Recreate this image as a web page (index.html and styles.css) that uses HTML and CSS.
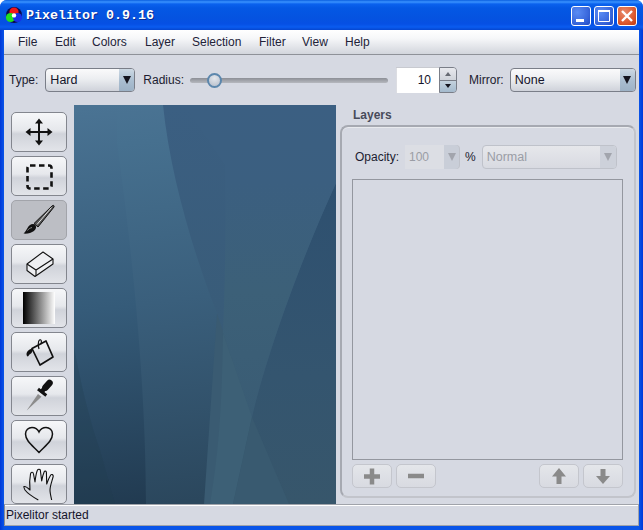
FILE: index.html
```html
<!DOCTYPE html>
<html lang="en">
<head>
<meta charset="utf-8">
<title>Pixelitor 0.9.16</title>
<link rel="stylesheet" href="styles.css">
</head>
<body>
<div class="window">
  <header class="titlebar">
    <svg class="app-icon" width="18" height="18" viewBox="0 0 18 18">
      <circle cx="9" cy="9" r="8" fill="#0a0a50"/>
      <circle cx="9" cy="6" r="4.6" fill="#f01818"/>
      <circle cx="5.5" cy="11.5" r="4.6" fill="#20e020"/>
      <circle cx="12.5" cy="11.5" r="4.6" fill="#1830e8"/>
      <circle cx="9" cy="9.4" r="2.2" fill="#fff"/>
    </svg>
    <span class="title-text">Pixelitor 0.9.16</span>
    <div class="win-buttons">
      <button class="win-btn"><svg width="20" height="20" viewBox="0 0 20 20"><rect x="5" y="13" width="8" height="3" fill="#fff"/></svg></button>
      <button class="win-btn"><svg width="20" height="20" viewBox="0 0 20 20"><path d="M4.500 4.500h11v11h-11z" fill="none" stroke="#fff"/><rect x="4" y="4" width="12" height="2" fill="#fff"/></svg></button>
      <button class="win-btn win-close"><svg width="20" height="20" viewBox="0 0 20 20"><path d="M5 5l10 10M15 5L5 15" stroke="#fff" stroke-width="2.400"/></svg></button>
    </div>
  </header>
  <div class="client">
    <nav class="menubar">
      <span>File</span><span>Edit</span><span>Colors</span><span>Layer</span><span>Selection</span><span>Filter</span><span>View</span><span>Help</span>
    </nav>
    <div class="toolbar">
      <label class="lbl lbl-type">Type:</label>
      <div class="combo combo-type"><span class="combo-val">Hard</span><span class="combo-arrow"><i class="tri-down"></i></span></div>
      <label class="lbl lbl-radius">Radius:</label>
      <div class="slider"><div class="slider-track"></div><div class="slider-thumb"></div></div>
      <div class="spinner">
        <span class="spin-val">10</span>
        <span class="spin-btns"><span class="spin-up"><i class="tri-up"></i></span><span class="spin-down"><i class="tri-down small"></i></span></span>
      </div>
      <label class="lbl lbl-mirror">Mirror:</label>
      <div class="combo combo-mirror"><span class="combo-val">None</span><span class="combo-arrow"><i class="tri-down"></i></span></div>
    </div>
    <div class="main">
      <aside class="tools">
        <button class="tool">
          <svg width="56" height="40" viewBox="0 0 56 40"><path d="M28 9v22M17 20h22" stroke="#111" stroke-width="2"/><path d="M28 6.500l4 5h-8zM28 33.500l4-5h-8zM14.500 20l5-4v8zM41.500 20l-5-4v8z" fill="#111"/></svg>
        </button>
        <button class="tool">
          <svg width="56" height="40" viewBox="0 0 56 40"><rect x="16.500" y="9.500" width="24" height="23" rx="2.500" fill="none" stroke="#111" stroke-width="2.600" stroke-dasharray="5.500 3.500"/></svg>
        </button>
        <button class="tool tool-active">
          <svg width="56" height="40" viewBox="0 0 56 40"><path d="M41.500 5.500c1-.6 2 .4 1.500 1.500L27 27l-4-3.500z" fill="#555" stroke="#111"/><path d="M40.500 7.500L26 24.500" stroke="#e6e6e6" stroke-width="1"/><path d="M22 24c2 0 3.500 2 3 4-.5 2-3 4-6 5-2 .6-5 .8-6.500.5 1.500-1 2.500-3 4-5.500 1-2 3-4 5.500-4z" fill="#111"/><path d="M16.500 30.500c1-1.500 2.500-2.500 4.500-3" stroke="#8a8a8a" fill="none"/></svg>
        </button>
        <button class="tool">
          <svg width="56" height="40" viewBox="0 0 56 40"><path d="M16 20l16-12 10 7v5L24 32.500l-8-6z" fill="#eeeff2" stroke="#111" stroke-width="1.100" stroke-linejoin="round"/><path d="M16 20l9 6 17-11M25 26v6" fill="none" stroke="#111" stroke-width="1.100"/></svg>
        </button>
        <button class="tool">
          <svg width="56" height="40" viewBox="0 0 56 40"><defs><linearGradient id="bw"><stop offset="0" stop-color="#000"/><stop offset="1" stop-color="#fff"/></linearGradient></defs><rect x="12" y="4" width="32" height="32" fill="url(#bw)"/></svg>
        </button>
        <button class="tool">
          <svg width="56" height="40" viewBox="0 0 56 40"><path d="M21 16.500l14-7.500 7 16-13 8z" fill="none" stroke="#111" stroke-width="1.700" stroke-linejoin="round"/><path d="M28 17c-1-3-1-8 .5-9s2.500 1 1.500 4" fill="none" stroke="#111" stroke-width="1.200"/><path d="M22 16c-3 1-6.500 3-6.500 6s2 3 2.500 1c.5-1 2-1 2.500-2 1-1 1-3 1.500-5z" fill="#111"/></svg>
        </button>
        <button class="tool">
          <svg width="56" height="40" viewBox="0 0 56 40"><path d="M15.700 34.500L27 18l3.500 2.800z" fill="#8c8c8c"/><path d="M27 13l8.300 6.500" stroke="#111" stroke-width="3"/><path d="M30 16.500l7-8" stroke="#111" stroke-width="4.500"/><path d="M34.500 11.500L38.500 7" stroke="#111" stroke-width="6.500" stroke-linecap="round"/></svg>
        </button>
        <button class="tool">
          <svg width="56" height="40" viewBox="0 0 56 40"><path d="M28 32.500C22 26 14.500 21 14.500 14c0-4 3-6.500 6.500-6.500 3 0 5.500 1.500 7 4.500 1.500-3 4-4.500 7-4.500 3.500 0 6.500 2.500 6.500 6.500 0 7-7.500 12-13.500 18.500z" fill="none" stroke="#111" stroke-width="1.500"/></svg>
        </button>
        <button class="tool">
          <svg width="56" height="40" viewBox="0 0 56 40"><path d="M27.300 36C22 33 17 30 14 26c-1-2-1.500-3-1-3.500 2-.5 4 1.500 6 3.500-.5-5-.5-11 .5-16 .5-2 2.500-2.500 3 0L24 18c.5-4 1-9 2.500-12 .5-1 2.500-1 2.800 0l1.400 11c.5-3 1.500-7 2.500-9.300.5-1 2-.8 2.200.6L35.700 20c1-3 2.500-6.500 4-9 .8-1 2.800-.5 2.500 1.500C41 17 39 22 39 26c0 3 1 7 1.700 10" fill="none" stroke="#111" stroke-width="1.100" stroke-linejoin="round"/></svg>
        </button>
      </aside>
      <div class="canvas">
        <svg width="262" height="399" viewBox="0 0 262 399">
          <defs>
            <linearGradient id="g0" gradientUnits="userSpaceOnUse" x1="40" y1="0" x2="90" y2="399"><stop offset="0" stop-color="#4a7393"/><stop offset=".5" stop-color="#355b79"/><stop offset="1" stop-color="#213a50"/></linearGradient>
            <linearGradient id="g1" gradientUnits="userSpaceOnUse" x1="40" y1="0" x2="90" y2="399"><stop offset="0" stop-color="#4a7393"/><stop offset=".1" stop-color="#46708f"/><stop offset=".5" stop-color="#3a5f7c"/><stop offset="1" stop-color="#2b475d"/></linearGradient>
            <linearGradient id="g2" x1="0" y1="0" x2="0" y2="1"><stop offset="0" stop-color="#3b5f82"/><stop offset=".5" stop-color="#395c79"/><stop offset="1" stop-color="#35556c"/></linearGradient>
            <linearGradient id="g3" x1="0" y1="0" x2="0" y2="1"><stop offset="0" stop-color="#3b5f82"/><stop offset=".25" stop-color="#3b5f80"/><stop offset=".6" stop-color="#3c6078"/><stop offset="1" stop-color="#3a5c74"/></linearGradient>
            <linearGradient id="g4" x1="0" y1="0" x2="0" y2="1"><stop offset="0" stop-color="#2e5070"/><stop offset=".6" stop-color="#34556f"/><stop offset="1" stop-color="#37566b"/></linearGradient>
          </defs>
          <rect width="262" height="399" fill="url(#g0)"/>
          <path d="M0 242C8 285 17 320 26 345L41 399H0z" fill="#1f3a4c" opacity=".25"/>
          <path d="M43 38C56 130 72 270 72 399H140C152 300 155 160 151 78L140 0H43z" fill="url(#g1)"/>
          <path d="M143 208L182 312 222 399H130z" fill="#3a5b72"/>
          <path d="M89 0C96 70 120 150 143 208L178 312 203 368 215 399H262V0z" fill="url(#g2)"/>
          <path d="M262 78C220 170 190 260 178 312L159 399H262z" fill="url(#g4)"/>
          <path d="M151 60C152 120 151 180 149 228L178 312C190 260 220 170 262 78V0H110z" fill="url(#g3)"/>
          <path d="M149 228L178 312 159 399H136C146 340 148 290 149 228z" fill="#3d6076"/>
          <path d="M178 312L215 399H159z" fill="#395a70"/>
        </svg>
      </div>
      <section class="layers">
        <h2 class="layers-title">Layers</h2>
        <div class="layers-panel">
          <div class="layers-top">
            <span class="lbl op-lbl">Opacity:</span>
            <div class="op-spin"><span class="op-val">100</span><span class="op-arrow"><i class="tri-down dim"></i></span></div>
            <span class="lbl pct">%</span>
            <div class="combo combo-blend"><span class="combo-val">Normal</span><span class="combo-arrow"><i class="tri-down dim"></i></span></div>
          </div>
          <div class="layer-list"></div>
          <div class="layer-btns">
            <button class="lbtn"><svg width="40" height="24" viewBox="0 0 40 24"><path d="M20 4.500v16M12 12.500h16" stroke="#8a8a8a" stroke-width="4.500"/></svg></button>
            <button class="lbtn"><svg width="40" height="24" viewBox="0 0 40 24"><path d="M12 12h16" stroke="#8a8a8a" stroke-width="4.500"/></svg></button>
            <span class="lbtn-spacer"></span>
            <button class="lbtn"><svg width="40" height="24" viewBox="0 0 40 24"><path d="M20 4l7 8.500h-4.500V20h-5v-7.500H13z" fill="#8a8a8a"/></svg></button>
            <button class="lbtn"><svg width="40" height="24" viewBox="0 0 40 24"><path d="M20 20l7-8h-4.500V5h-5v7H13z" fill="#8a8a8a"/></svg></button>
          </div>
        </div>
      </section>
    </div>
    <footer class="status">Pixelitor started</footer>
  </div>
</div>
</body>
</html>
```

FILE: styles.css
```css
* { box-sizing: border-box; }
html, body { margin: 0; padding: 0; background: #fff; }
body { width: 643px; height: 530px; overflow: hidden; font-family: "Liberation Sans", Arial, sans-serif; font-size: 12px; color: #1c1c30; }

.window { width: 643px; height: 530px; display: flex; flex-direction: column; background: linear-gradient(90deg, #0038d8 0, #0a55e8 4px, #0a55e8 639px, #0038d8 100%); border-radius: 7px 7px 0 0; overflow: hidden; }

.titlebar { height: 30px; flex: none; display: flex; align-items: center; padding: 0 6px 0 5px; background: linear-gradient(180deg, #0a5fe0 0, #3a93ff 2px, #0a62ee 4px, #0458e4 8px, #0553e0 18px, #0650e4 24px, #0a5cf0 27px, #0546d0 30px); }
.app-icon { flex: none; margin-right: 3px; }
.title-text { font-family: "Liberation Mono", monospace; font-size: 13.33px; font-weight: 700; color: #fff; text-shadow: 1px 1px 0 #0a2a90; }
.win-buttons { margin-left: auto; display: flex; gap: 3px; margin-top: 2px; }
.win-btn { width: 20px; height: 20px; padding: 0; border: 1px solid #fff; border-radius: 3px; background: radial-gradient(circle at 30% 30%, #5a8cf4, #3a68dc 60%, #1e48c4); display: block; }
.win-btn svg { display: block; margin: -1px; }
.win-close { background: radial-gradient(circle at 35% 30%, #e88a6c, #dc5a30 60%, #c03810); }

.client { flex: 1; margin: 0 4px 4px; background: #d6d9e2; display: flex; flex-direction: column; min-height: 0; }

.menubar { height: 25px; flex: none; display: grid; grid-template-columns: 37px 37px 53px 47px 67px 43px 43px auto; align-items: center; padding: 0 0 0 14px; background: linear-gradient(180deg, #ffffff 0, #f6f7f9 35%, #d2d5dc 100%); border-bottom: 1px solid #8e9198; color: #222238; }

.toolbar { height: 50px; flex: none; display: flex; align-items: center; padding: 0 3px 0 5px; }
.lbl { color: #1c1c30; }
.lbl-type { margin-right: 7px; }
.lbl-radius { margin: 0 6px 0 8px; }
.lbl-mirror { margin: 0 6px 0 12px; }

.combo { height: 24px; display: flex; border: 1px solid #7a7e88; border-radius: 4px; background: linear-gradient(180deg, #fafafb 0, #eceef1 45%, #cfd2da 100%); overflow: hidden; }
.combo-val { flex: 1; padding-left: 4px; line-height: 22px; font-size: 12.5px; color: #14142a; }
.combo-arrow { width: 15px; display: flex; align-items: center; justify-content: center; background: linear-gradient(180deg, #cdd9e4 0, #a9bdd0 55%, #9db2c6 100%); }
.combo-type { width: 90px; }
.combo-mirror { width: 126px; }

.tri-down, .tri-up { display: block; width: 0; height: 0; border-left: 4.5px solid transparent; border-right: 4.5px solid transparent; }
.tri-down { border-top: 8px solid #15151f; }
.tri-up { border-left-width: 3.500px; border-right-width: 3.500px; border-bottom: 4px solid #666a72; }
.tri-down.small { border-left-width: 3.500px; border-right-width: 3.500px; border-top-width: 4px; }
.tri-down.dim { border-top-color: #a2a5ad; }

.slider { width: 198px; height: 20px; position: relative; display: flex; align-items: center; margin-right: 8px; }
.slider-track { width: 100%; height: 5px; border-radius: 3px; background: linear-gradient(180deg, #8c8f96, #b6b8be); }
.slider-thumb { position: absolute; left: 17px; top: 3px; width: 15px; height: 15px; border-radius: 50%; border: 2px solid #5c87ad; background: radial-gradient(circle at 50% 30%, #e4e7ec, #b4bcc9); }

.spinner { width: 61px; height: 26px; display: flex; }
.spin-val { flex: 1; background: #fff; text-align: right; line-height: 26px; padding-right: 8px; color: #14142a; box-shadow: inset 0 1px 0 #c8cad0, inset 1px 0 0 #dcdde2; }
.spin-btns { width: 18px; display: flex; flex-direction: column; border: 1px solid #7a7e88; border-radius: 0 4px 4px 0; overflow: hidden; }
.spin-up, .spin-down { flex: 1; display: flex; align-items: center; justify-content: center; }
.spin-up { background: linear-gradient(180deg, #e8e9ee, #cfd3da); border-bottom: 1px solid #7a7e88; }
.spin-down { background: linear-gradient(180deg, #c4d2de, #a4bacd); }

.main { height: 399px; flex: none; display: flex; }

.tools { width: 70px; flex: none; display: flex; flex-direction: column; gap: 4px; padding: 7px 0 0 7px; overflow: hidden; }
.tool { width: 56px; height: 40px; flex: none; padding: 0; border: 1px solid #83868e; border-radius: 5px; background: linear-gradient(180deg, #f6f7f9 0, #e6e8ec 45%, #d0d3da 55%, #e2e4e9 100%); }
.tool svg { display: block; margin: -1px; }
.tool-active { background: #bcbec4; border-color: #a2a4aa; }

.canvas { width: 262px; flex: none; }
.canvas svg { display: block; }

.layers { flex: 1; display: flex; flex-direction: column; padding: 0 3px 6px 4px; min-width: 0; }
.layers-title { margin: 4px 0 0 13px; height: 16px; font-size: 12px; line-height: 13px; font-weight: 700; color: #484b5a; flex: none; }
.layers-panel { flex: 1; display: flex; flex-direction: column; border: 2px solid #a6a9b1; border-right-color: #c2c4cb; border-bottom-color: #c2c4cb; border-radius: 8px; padding: 18px 10px 8px 10px; box-shadow: inset 0 1px 0 #e8eaee; min-height: 0; }
.layers-top { height: 24px; display: flex; align-items: center; flex: none; margin-bottom: 10px; padding-left: 3px; }
.op-lbl { margin-right: 6px; }
.op-spin { width: 54px; height: 24px; display: flex; background: #dcdee4; border-radius: 0 4px 4px 0; }
.op-val { flex: 1; padding-left: 4px; line-height: 24px; color: #9a9da5; }
.op-arrow { width: 15px; display: flex; align-items: center; justify-content: center; background: #c9ced8; border-radius: 0 4px 4px 0; box-shadow: 1px 0 0 #bfc2ca; }
.pct { margin: 0 6px 0 6px; }
.combo-blend { width: 135px; border-color: #bfc2ca; background: linear-gradient(180deg, #e6e7eb, #d8dae1); }
.combo-blend .combo-val { color: #9a9da5; }
.combo-blend .combo-arrow { background: #cdd1da; width: 16px; }
.layer-list { width: 271px; height: 281px; flex: none; border: 1px solid #94979f; background: #d6d9e2; }
.layer-btns { width: 271px; height: 24px; display: flex; gap: 4px; margin-top: 4px; flex: none; }
.lbtn { width: 40px; height: 24px; padding: 0; border: 1px solid #c4c6cd; border-radius: 5px; background: linear-gradient(180deg, #e4e6ea, #d8dae1); flex: none; }
.lbtn svg { display: block; margin: -1px; }
.lbtn-spacer { flex: 1; }

.status { height: 22px; flex: none; border: 1px solid #a0a3aa; border-left-color: #8a8d95; box-shadow: inset 0 1px 0 #fff; padding-left: 1px; line-height: 20px; color: #14142a; background: #d6d9e2; }
```
